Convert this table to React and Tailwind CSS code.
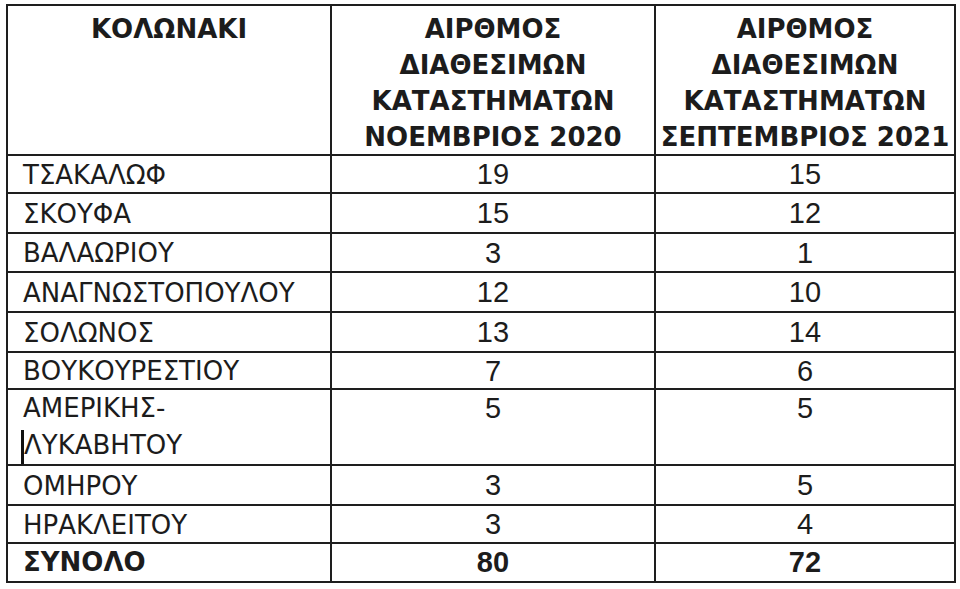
const rows = [
	{ name: "ΤΣΑΚΑΛΩΦ", a: "19", b: "15", h: "h-[36px]" },
	{ name: "ΣΚΟΥΦΑ", a: "15", b: "12", h: "h-[38px]" },
	{ name: "ΒΑΛΑΩΡΙΟΥ", a: "3", b: "1", h: "h-[37px]" },
	{ name: "ΑΝΑΓΝΩΣΤΟΠΟΥΛΟΥ", a: "12", b: "10", h: "h-[38px]" },
	{ name: "ΣΟΛΩΝΟΣ", a: "13", b: "14", h: "h-[38px]" },
	{ name: "ΒΟΥΚΟΥΡΕΣΤΙΟΥ", a: "7", b: "6", h: "h-[35px]" },
];

const rows2 = [
	{ name: "ΟΜΗΡΟΥ", a: "3", b: "5", h: "h-[38px]" },
	{ name: "ΗΡΑΚΛΕΙΤΟΥ", a: "3", b: "4", h: "h-[36px]" },
];

const text = "font-['DejaVu_Sans',sans-serif] text-[26px] text-[#1c1c1c]";
const num = "font-['Liberation_Sans',Arial,sans-serif] text-[29px] text-[#1c1c1c]";

function Row({ name, a, b, h }) {
	return (
		<>
			<div className={`${h} bg-white flex items-center pl-[15px] pt-[2px] ${text}`}>{name}</div>
			<div className={`${h} bg-white flex items-center justify-center pt-[2px] ${num}`}>{a}</div>
			<div className={`${h} bg-white flex items-center justify-center pt-[2px] ${num}`}>{b}</div>
		</>
	);
}

export default function App() {
	return (
		<div className="w-[960px] h-[589px] bg-white pt-[4px] pl-[6px]">
			<div className="grid grid-cols-[322px_322px_298px] gap-[2px] bg-[#1e1e1e] p-[2px] w-[950px]">
				{/* header */}
				<div className={`h-[148px] bg-white text-center pt-[5px] leading-[36px] font-bold ${text}`}>
					ΚΟΛΩΝΑΚΙ
				</div>
				<div className={`h-[148px] bg-white text-center pt-[5px] leading-[36px] font-bold whitespace-nowrap ${text}`}>
					ΑΙΡΘΜΟΣ
					<br />
					ΔΙΑΘΕΣΙΜΩΝ
					<br />
					ΚΑΤΑΣΤΗΜΑΤΩΝ
					<br />
					ΝΟΕΜΒΡΙΟΣ 2020
				</div>
				<div className={`h-[148px] bg-white text-center pt-[5px] leading-[36px] font-bold whitespace-nowrap ${text}`}>
					ΑΙΡΘΜΟΣ
					<br />
					ΔΙΑΘΕΣΙΜΩΝ
					<br />
					ΚΑΤΑΣΤΗΜΑΤΩΝ
					<br />
					ΣΕΠΤΕΜΒΡΙΟΣ 2021
				</div>

				{rows.map((r) => (
					<Row key={r.name} {...r} />
				))}

				{/* two-line row */}
				<div className={`h-[74px] bg-white pl-[15px] leading-[37px] ${text}`}>
					ΑΜΕΡΙΚΗΣ-
					<br />
					<span className="inline-block w-0 h-[34px] border-l-[3px] border-[#111] align-middle -ml-[2px]"></span>
					ΛΥΚΑΒΗΤΟΥ
				</div>
				<div className={`h-[74px] bg-white text-center leading-[37px] ${num}`}>5</div>
				<div className={`h-[74px] bg-white text-center leading-[37px] ${num}`}>5</div>

				{rows2.map((r) => (
					<Row key={r.name} {...r} />
				))}

				{/* total */}
				<div className={`h-[37px] bg-white flex items-center pl-[15px] font-bold ${text}`}>ΣΥΝΟΛΟ</div>
				<div className={`h-[37px] bg-white flex items-center justify-center font-bold ${num}`}>80</div>
				<div className={`h-[37px] bg-white flex items-center justify-center font-bold ${num}`}>72</div>
			</div>
		</div>
	);
}
